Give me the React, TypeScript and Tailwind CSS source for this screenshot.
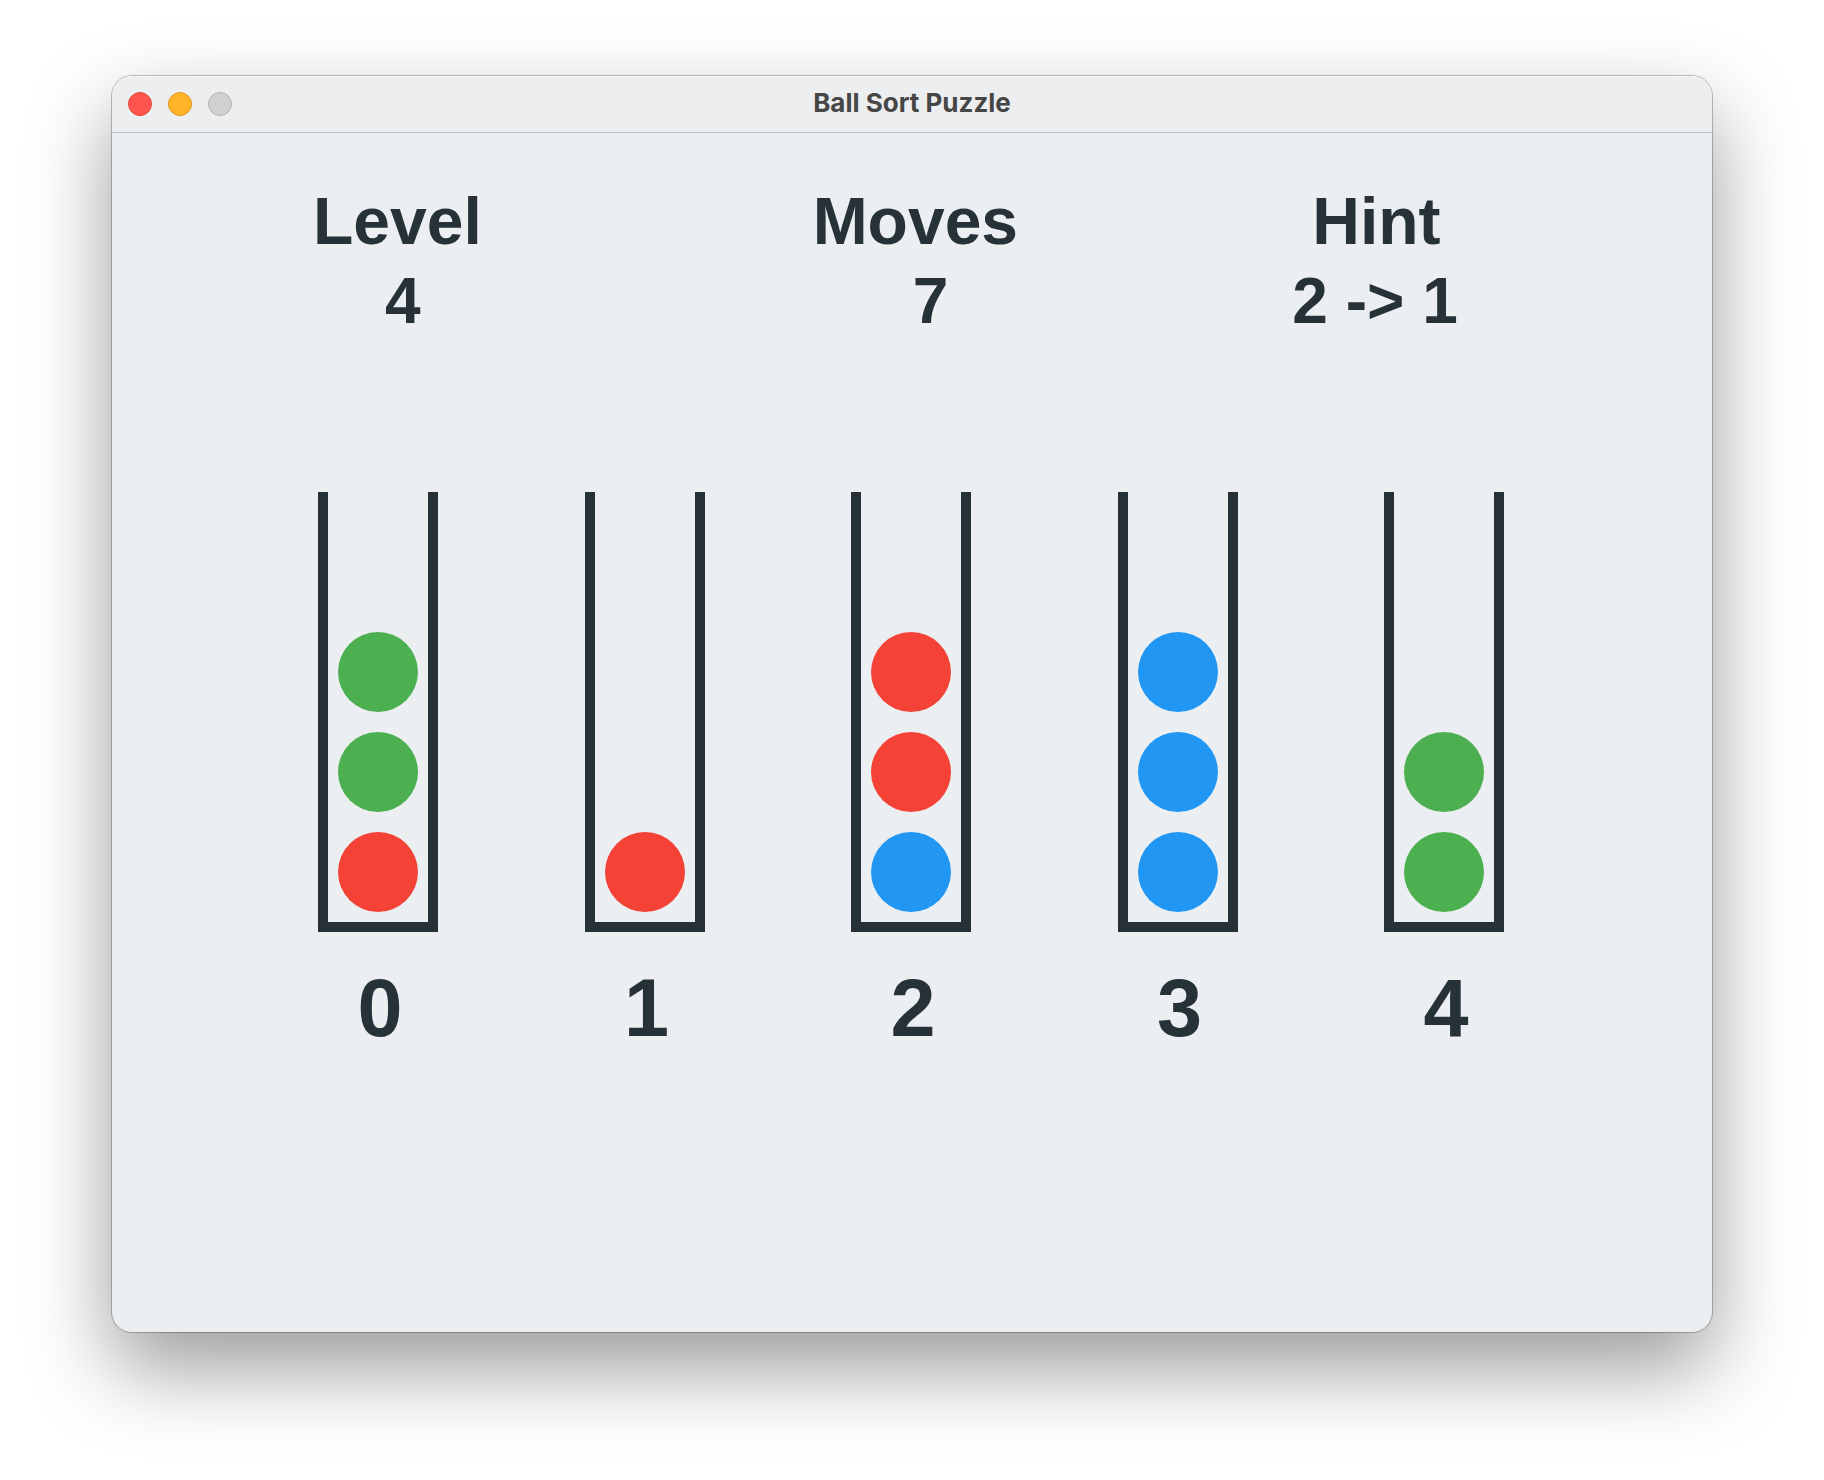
type Color = "red" | "green" | "blue";

const BALL: Record<Color, string> = {
  red: "bg-[#f44336]",
  green: "bg-[#4caf50]",
  blue: "bg-[#2196f3]",
};

// Balls are listed from top to bottom.
const TUBES: Color[][] = [
  ["green", "green", "red"],
  ["red"],
  ["red", "red", "blue"],
  ["blue", "blue", "blue"],
  ["green", "green"],
];

const STATS = [
  { label: "Level", value: "4", labelIndent: "", valueIndent: "pl-[72px]" },
  { label: "Moves", value: "7", labelIndent: "", valueIndent: "pl-[100px]" },
  { label: "Hint", value: "2 -> 1", labelIndent: "pl-5", valueIndent: "" },
];

const CONTROLS = [
  { name: "Close", style: "bg-[#ff544d] border-[#e2453f]" },
  { name: "Minimize", style: "bg-[#ffb429] border-[#dd9a1d]" },
  { name: "Zoom", style: "bg-[#d0d1d3] border-[#b2b3b5]" },
];

function TitleBar() {
  return (
    <header className="grid h-[57px] grid-cols-[1fr_auto_1fr] items-center border-b border-[#bfc1c3] bg-[#edeef0] px-4 shadow-[inset_0_1px_0_#f8f9fa]">
      <div className="flex gap-4">
        {CONTROLS.map((c) => (
          <button key={c.name} type="button" aria-label={c.name} className={`size-6 rounded-full border ${c.style}`} />
        ))}
      </div>
      <h1 className="pb-0.5 font-['Inter',sans-serif] text-[26px] leading-8 font-bold text-[#464646]">Ball Sort Puzzle</h1>
    </header>
  );
}

function Tube({ balls, index }: { balls: Color[]; index: number }) {
  return (
    <li className="flex w-[120px] flex-col gap-[30px]">
      <div className="flex h-[440px] flex-col items-center justify-end gap-5 border-x-10 border-b-10 border-[#263238] pb-[10px]">
        {balls.map((color, i) => (
          <span key={i} className={`size-20 rounded-full ${BALL[color]}`} />
        ))}
      </div>
      <span className="pl-1 text-center text-[81px] leading-[92px]">{index}</span>
    </li>
  );
}

export default function App() {
  return (
    <div className="flex min-h-screen flex-col bg-white px-[112px] pt-[76px] pb-[148px]">
      <main className="flex flex-1 flex-col overflow-hidden rounded-[20px] bg-[#ebeff2] font-['Liberation_Sans',Arial,sans-serif] font-bold text-[#263238] shadow-[0_0_0_1px_rgba(0,0,0,0.24),0_36px_84px_rgba(0,0,0,0.4)]">
        <TitleBar />
        <dl className="grid grid-cols-[25fr_24fr_21fr] pt-12 pl-[201px] leading-20 whitespace-nowrap">
          {STATS.map((s) => (
            <div key={s.label}>
              <dt className={`text-[66px] leading-20 ${s.labelIndent}`}>{s.label}</dt>
              <dd className={`text-[64px] leading-20 ${s.valueIndent}`}>{s.value}</dd>
            </div>
          ))}
        </dl>
        <ol className="mt-[151px] flex justify-between pr-[208px] pl-[206px]">
          {TUBES.map((balls, i) => (
            <Tube key={i} balls={balls} index={i} />
          ))}
        </ol>
      </main>
    </div>
  );
}
